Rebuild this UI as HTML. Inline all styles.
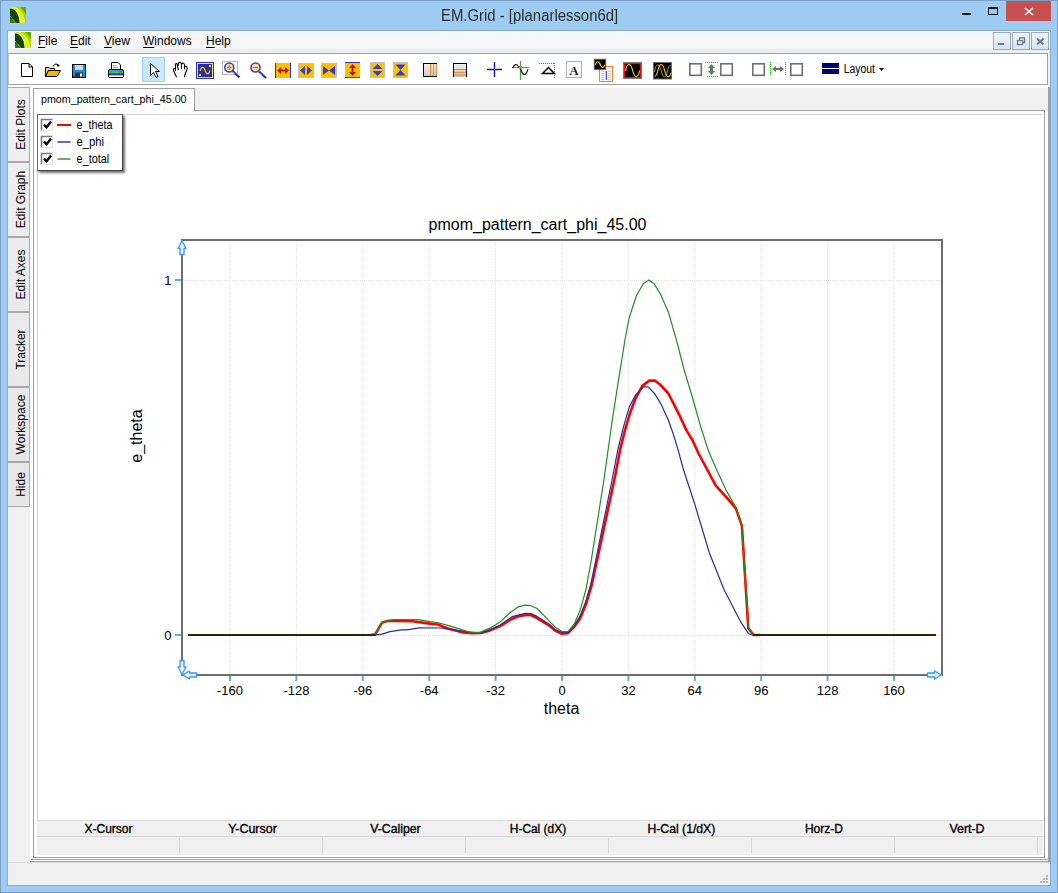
<!DOCTYPE html>
<html><head><meta charset="utf-8">
<style>
*{margin:0;padding:0;box-sizing:border-box}
html,body{width:1058px;height:893px;overflow:hidden;background:#9ecbf2;font-family:"Liberation Sans",sans-serif;color:#000}
.a{position:absolute}
.t{position:absolute;white-space:nowrap;line-height:1}
u{text-underline-offset:2px}
</style></head><body>
<!-- window frame -->
<div class="a" style="left:0;top:0;width:1058px;height:893px;border:1px solid #7a9fc6"></div>
<!-- title -->
<div class="t" style="left:441px;top:8px;font-size:15.6px;color:#2b2b2b;transform:scaleX(0.955);transform-origin:0 0">EM.Grid - [planarlesson6d]</div>
<!-- client -->
<div class="a" style="left:7px;top:30px;width:1044px;height:856px;background:#f0f0f0;border:1px solid #86acd5"></div>
<!-- menubar -->
<div class="a" style="left:8px;top:31px;width:1042px;height:22px;background:#f5f6f7"></div>
<div class="a" style="left:8px;top:49px;width:1042px;height:4px;background:#eceef0"></div>
<div class="t" style="left:38px;top:35px;font-size:12px"><u>F</u>ile</div>
<div class="t" style="left:70px;top:35px;font-size:12px"><u>E</u>dit</div>
<div class="t" style="left:104px;top:35px;font-size:12px"><u>V</u>iew</div>
<div class="t" style="left:143px;top:35px;font-size:12px"><u>W</u>indows</div>
<div class="t" style="left:206px;top:35px;font-size:12px"><u>H</u>elp</div>
<!-- toolbar -->
<div class="a" style="left:8px;top:53px;width:1040px;height:32px;background:#fff;border:1px solid #a0a0a0;border-left-color:#c8c8c8"></div>
<!-- child window -->
<div class="a" style="left:30px;top:85px;width:1020px;height:777px;background:#fff"></div>
<div class="a" style="left:1048px;top:87px;width:2px;height:775px;background:#a0a0a0"></div>
<div class="a" style="left:31px;top:859px;width:1019px;height:1px;background:#a0a0a0"></div>
<div class="a" style="left:30px;top:861px;width:1020px;height:1px;background:#a0a0a0"></div>
<!-- tab strip -->
<div class="a" style="left:195px;top:88px;width:853px;height:23px;background:#f0f0f0"></div>
<div class="a" style="left:33px;top:88px;width:162px;height:23px;background:#fff;border:1px solid #a0a0a0;border-bottom:none"></div>
<div class="t" style="left:41px;top:94px;font-size:10.7px">pmom_pattern_cart_phi_45.00</div>
<!-- tab page frame -->
<div class="a" style="left:33px;top:110px;width:1012px;height:748px;border:1px solid #a0a0a0;border-top:none"></div>
<div class="a" style="left:195px;top:110px;width:850px;height:1px;background:#a0a0a0"></div>
<div class="a" style="left:37px;top:114px;width:1006px;height:707px;background:#fff;border-left:1px solid #d4d4d4;border-top:1px solid #d4d4d4"></div>
<!-- vertical tabs -->
<div class="a" style="left:8px;top:87px;width:22px;height:775px;background:#f0f0f0"></div>
<svg class="a" style="left:0;top:0" width="1058" height="893" viewBox="0 0 1058 893">
<g stroke="#e2e2e2" stroke-width="1" stroke-dasharray="1,1"><line x1="230.0" y1="242" x2="230.0" y2="674"/><line x1="296.4" y1="242" x2="296.4" y2="674"/><line x1="362.8" y1="242" x2="362.8" y2="674"/><line x1="429.2" y1="242" x2="429.2" y2="674"/><line x1="495.6" y1="242" x2="495.6" y2="674"/><line x1="562.0" y1="242" x2="562.0" y2="674"/><line x1="628.4" y1="242" x2="628.4" y2="674"/><line x1="694.8" y1="242" x2="694.8" y2="674"/><line x1="761.2" y1="242" x2="761.2" y2="674"/><line x1="827.6" y1="242" x2="827.6" y2="674"/><line x1="894.0" y1="242" x2="894.0" y2="674"/><line x1="184" y1="280.5" x2="941" y2="280.5"/><line x1="184" y1="635.5" x2="941" y2="635.5"/></g>
<g stroke="#66b0b0" stroke-width="2"><line x1="230.0" y1="676" x2="230.0" y2="681"/><line x1="296.4" y1="676" x2="296.4" y2="681"/><line x1="362.8" y1="676" x2="362.8" y2="681"/><line x1="429.2" y1="676" x2="429.2" y2="681"/><line x1="495.6" y1="676" x2="495.6" y2="681"/><line x1="562.0" y1="676" x2="562.0" y2="681"/><line x1="628.4" y1="676" x2="628.4" y2="681"/><line x1="694.8" y1="676" x2="694.8" y2="681"/><line x1="761.2" y1="676" x2="761.2" y2="681"/><line x1="827.6" y1="676" x2="827.6" y2="681"/><line x1="894.0" y1="676" x2="894.0" y2="681"/><line x1="175" y1="280" x2="181" y2="280"/><line x1="175" y1="635" x2="181" y2="635"/></g>
<rect x="182" y="240" width="760" height="435" fill="none" stroke="#6e6e6e" stroke-width="2"/>
<polyline fill="none" stroke="#ff0000" stroke-width="2.6" stroke-linejoin="round" points="370,635 375.1,634.6 381.9,622.8 388.2,620.8 412.5,621.3 430,623.6 437.9,624.5 447,628.2 464,632.7 472.5,633.3 481,633 490,630.4 500.2,626.1 509.9,619.9 518.4,616.2 526.3,614.9 530.8,615 537.1,618.2 550,626.1 555.1,630.6 561.9,633.8 568,633.1 574,627 580,618.7 586.4,603 591.7,585.1 597.1,560 614.3,480 620.2,449.4 625.2,429.3 630.2,412.5 635.8,397.9 642.6,385.6 649.3,380.6 654.9,380.6 660,384.5 668,393 673.6,403.6 679.2,414.8 685.9,429.4 692.6,440.5 698.8,454 706.6,468.5 715.6,485.3 726.7,497.6 736,508.7 741.9,525.9 748.3,628.1 753.7,635 760,635"/>
<polyline fill="none" stroke="#2b2ba0" stroke-width="1.2" stroke-linejoin="round" points="370,635 375.1,634.8 381.3,634.4 389.9,631.6 401.2,629.9 406.9,629.9 419.3,627.9 441.3,628 449.9,629.3 466.9,631.8 481,633 490,629.6 500.2,625 512.1,616.7 525.2,613.3 530.8,613.6 537.1,616.4 550,624.7 555.1,629.5 561.9,632.3 568,632.9 574,625.9 580,616.4 585.5,602.1 590.8,584.2 595.8,560 612,480 617.9,449.4 623.5,427 629.3,406.9 635.8,394.6 643.7,386.9 648.2,386.9 654.9,394 660.7,403.6 668,419.3 673.6,435 678.6,451.7 683.1,468.5 694.6,503.7 709.4,553 724.2,590 741.4,623.2 748.8,633.8 752.5,635 760,635"/>
<polyline fill="none" stroke="#1f8f1f" stroke-width="1.2" stroke-linejoin="round" points="370,635 375.1,634.4 381.9,622.6 388.2,620.6 394.4,619.6 418.2,619.6 430,621.6 437.4,622.5 448.7,625.6 469.7,632.1 479.9,632.4 490,628.1 500.2,622.1 509.9,612.8 518.4,606.8 525.2,605.1 530.8,605.7 537.1,608.5 550,621.8 555.1,627 561.9,631.5 568,631.7 574,624.4 580,610.8 585.9,589.6 591.3,560 603.9,480 612.4,419 620.2,369.6 625.2,338.5 629.2,317.5 636.5,295.5 643.3,283.7 648.8,280.1 654.4,284.1 660.5,294.2 668.5,312.3 676.6,340.6 684.2,370 692.6,398 700.5,426 708.3,450.6 716.1,468.5 726.7,491.4 736,507.4 741.9,525.9 748.3,628.1 753.7,635 760,635"/>
<g stroke="#2b2800" stroke-width="2"><line x1="188" y1="635" x2="375.5" y2="635"/><line x1="753.2" y1="635" x2="936" y2="635"/></g>
<g font-family="Liberation Sans" font-size="13" fill="#000"><text x="230.0" y="695" text-anchor="middle">-160</text><text x="296.4" y="695" text-anchor="middle">-128</text><text x="362.8" y="695" text-anchor="middle">-96</text><text x="429.2" y="695" text-anchor="middle">-64</text><text x="495.6" y="695" text-anchor="middle">-32</text><text x="562.0" y="695" text-anchor="middle">0</text><text x="628.4" y="695" text-anchor="middle">32</text><text x="694.8" y="695" text-anchor="middle">64</text><text x="761.2" y="695" text-anchor="middle">96</text><text x="827.6" y="695" text-anchor="middle">128</text><text x="894.0" y="695" text-anchor="middle">160</text><text x="171.5" y="285" text-anchor="end">1</text><text x="171.5" y="640" text-anchor="end">0</text></g>
<g font-family="Liberation Sans" font-size="16" fill="#000"><text x="537.5" y="230" text-anchor="middle">pmom_pattern_cart_phi_45.00</text><text x="561.5" y="714" text-anchor="middle">theta</text><text transform="translate(141.7,436) rotate(-90)" text-anchor="middle">e_theta</text></g>
<path fill="#f0f0f0" stroke="#3399ff" stroke-width="1.3" stroke-linejoin="round" d="M182,240.5 L186,248.5 L184,248.5 L184,254.5 L180,254.5 L180,248.5 L178,248.5 Z"/>
<path fill="#f0f0f0" stroke="#3399ff" stroke-width="1.3" stroke-linejoin="round" d="M182,674.5 L178,667 L180,667 L180,660.5 L184,660.5 L184,667 L186,667 Z"/>
<path fill="#f0f0f0" stroke="#3399ff" stroke-width="1.3" stroke-linejoin="round" d="M182.5,675 L189.5,671 L189.5,673 L196.5,673 L196.5,677 L189.5,677 L189.5,679 Z"/>
<path fill="#f0f0f0" stroke="#3399ff" stroke-width="1.3" stroke-linejoin="round" d="M941.5,675 L934.5,671 L934.5,673 L927.5,673 L927.5,677 L934.5,677 L934.5,679 Z"/>
</svg>
<!-- legend -->
<div class="a" style="left:39px;top:116px;width:86px;height:57px;background:rgba(0,0,0,0.55);filter:blur(1px)"></div>
<div class="a" style="left:37px;top:114px;width:86px;height:57px;background:#fff;border:1px solid #6a6a6a;border-right-color:#444;border-bottom-color:#444"></div>
<svg class="a" style="left:0;top:0" width="200" height="200" viewBox="0 0 200 200" font-family="Liberation Sans">
<g>
<rect x="41" y="119" width="12" height="12" fill="#fff"/>
<path d="M41.5,131 V119.5 H53" fill="none" stroke="#7a7a7a" stroke-width="1.6"/>
<path d="M41,130.5 H52.5 V119" fill="none" stroke="#e2e2e2" stroke-width="1"/>
<path d="M44,124.5 L46.5,127.5 L51,121.5" fill="none" stroke="#000" stroke-width="2.3"/>
</g>
<g transform="translate(0,17)">
<rect x="41" y="119" width="12" height="12" fill="#fff"/>
<path d="M41.5,131 V119.5 H53" fill="none" stroke="#7a7a7a" stroke-width="1.6"/>
<path d="M41,130.5 H52.5 V119" fill="none" stroke="#e2e2e2" stroke-width="1"/>
<path d="M44,124.5 L46.5,127.5 L51,121.5" fill="none" stroke="#000" stroke-width="2.3"/>
</g>
<g transform="translate(0,34)">
<rect x="41" y="119" width="12" height="12" fill="#fff"/>
<path d="M41.5,131 V119.5 H53" fill="none" stroke="#7a7a7a" stroke-width="1.6"/>
<path d="M41,130.5 H52.5 V119" fill="none" stroke="#e2e2e2" stroke-width="1"/>
<path d="M44,124.5 L46.5,127.5 L51,121.5" fill="none" stroke="#000" stroke-width="2.3"/>
</g>
<rect x="57" y="124" width="14" height="2" fill="#ff0000"/>
<rect x="57.5" y="141" width="13" height="2" fill="#6a6ab8"/>
<rect x="57.5" y="158" width="13" height="2" fill="#6ab06a"/>
<g font-size="12" fill="#000" letter-spacing="0">
<text x="76.6" y="128.6" textLength="35.9" lengthAdjust="spacingAndGlyphs">e_theta</text>
<text x="76.6" y="145.6" textLength="27.5" lengthAdjust="spacingAndGlyphs">e_phi</text>
<text x="76.6" y="162.6" textLength="32.7" lengthAdjust="spacingAndGlyphs">e_total</text>
</g>
</svg>

<!-- vertical tabs -->
<div class="a" style="left:8px;top:85px;width:22px;height:2px;background:#fff"></div>
<div class="a" style="left:8px;top:87px;width:22px;height:420px;border-top:1px solid #acacac;border-right:1px solid #acacac;border-bottom:1px solid #acacac;background:linear-gradient(#f0f0f0,#e6e6e6)"></div>
<div class="a" style="left:8px;top:161px;width:21px;height:2px;background:#a8a8a8"></div>
<div class="a" style="left:8px;top:236px;width:21px;height:2px;background:#a8a8a8"></div>
<div class="a" style="left:8px;top:311px;width:21px;height:2px;background:#a8a8a8"></div>
<div class="a" style="left:8px;top:386px;width:21px;height:2px;background:#a8a8a8"></div>
<div class="a" style="left:8px;top:461px;width:21px;height:2px;background:#a8a8a8"></div>
<svg class="a" style="left:0;top:0" width="40" height="520" viewBox="0 0 40 520" font-family="Liberation Sans" font-size="12" fill="#000">
<text transform="translate(25,124.5) rotate(-90)" text-anchor="middle">Edit Plots</text>
<text transform="translate(25,199.5) rotate(-90)" text-anchor="middle">Edit Graph</text>
<text transform="translate(25,274.5) rotate(-90)" text-anchor="middle">Edit Axes</text>
<text transform="translate(25,349.5) rotate(-90)" text-anchor="middle">Tracker</text>
<text transform="translate(25,424.5) rotate(-90)" text-anchor="middle">Workspace</text>
<text transform="translate(25,484.5) rotate(-90)" text-anchor="middle">Hide</text>
</svg>
<!-- status grid -->
<div class="a" style="left:37px;top:820px;width:1006px;height:1px;background:#d8d8d8"></div>
<div class="a" style="left:37px;top:821px;width:1006px;height:34px;background:#f0f0f0"></div>
<div class="a" style="left:37px;top:836px;width:1006px;height:1px;background:#d8d8d8"></div>
<div class="a" style="left:179px;top:838px;width:1px;height:15px;background:#d8d8d8"></div>
<div class="a" style="left:322px;top:838px;width:1px;height:15px;background:#d8d8d8"></div>
<div class="a" style="left:465px;top:838px;width:1px;height:15px;background:#d8d8d8"></div>
<div class="a" style="left:608px;top:838px;width:1px;height:15px;background:#d8d8d8"></div>
<div class="a" style="left:751px;top:838px;width:1px;height:15px;background:#d8d8d8"></div>
<div class="a" style="left:894px;top:838px;width:1px;height:15px;background:#d8d8d8"></div>
<div class="a" style="left:1037px;top:838px;width:1px;height:15px;background:#d8d8d8"></div>
<svg class="a" style="left:0;top:800px" width="1058" height="60" viewBox="0 800 1058 60" font-family="Liberation Sans" font-size="12" fill="#000" stroke="#000" stroke-width="0.35"><text x="84.5" y="833" textLength="48" lengthAdjust="spacingAndGlyphs">X-Cursor</text><text x="228.2" y="833" textLength="48.6" lengthAdjust="spacingAndGlyphs">Y-Cursor</text><text x="370.3" y="833" textLength="50.3" lengthAdjust="spacingAndGlyphs">V-Caliper</text><text x="509.8" y="833" textLength="56.3" lengthAdjust="spacingAndGlyphs">H-Cal (dX)</text><text x="647.5" y="833" textLength="67.8" lengthAdjust="spacingAndGlyphs">H-Cal (1/dX)</text><text x="804.9" y="833" textLength="38" lengthAdjust="spacingAndGlyphs">Horz-D</text><text x="949.5" y="833" textLength="35" lengthAdjust="spacingAndGlyphs">Vert-D</text></svg>
<!-- grip -->
<svg class="a" style="left:1039px;top:873px" width="12" height="12" viewBox="0 0 12 12" fill="#b8b8b8">
<rect x="7" y="2" width="2" height="2"/><rect x="4" y="5" width="2" height="2"/><rect x="7" y="5" width="2" height="2"/><rect x="1" y="8" width="2" height="2"/><rect x="4" y="8" width="2" height="2"/><rect x="7" y="8" width="2" height="2"/>
</svg>

<!-- status bar -->
<div class="a" style="left:8px;top:862px;width:1042px;height:1px;background:#dadada"></div>
<svg class="a" style="left:0;top:0" width="1058" height="893" viewBox="0 0 1058 893" font-family="Liberation Sans">
<defs>
<linearGradient id="appg" x1="0" y1="1" x2="1" y2="0"><stop offset="0" stop-color="#0d3a05"/><stop offset="0.5" stop-color="#3f7a0c"/><stop offset="1" stop-color="#b8e020"/></linearGradient>
<linearGradient id="mdig" x1="0" y1="0" x2="0" y2="1"><stop offset="0" stop-color="#eef4fb"/><stop offset="1" stop-color="#d6e4f2"/></linearGradient>
<linearGradient id="vlg" x1="0" y1="0" x2="0" y2="1"><stop offset="0" stop-color="#f4f4f4"/><stop offset="1" stop-color="#c8c8c8"/></linearGradient>
<clipPath id="appc"><rect x="0" y="0" width="16" height="16"/></clipPath>
<g id="app" clip-path="url(#appc)">
<rect x="0" y="0" width="16" height="16" fill="#72a400"/>
<ellipse cx="0" cy="16" rx="17.5" ry="19.5" fill="#a0d810"/>
<ellipse cx="0" cy="16" rx="15" ry="17" fill="#eef830"/>
<ellipse cx="0" cy="16" rx="13" ry="16" fill="#c0e828"/>
<ellipse cx="0" cy="16" rx="12" ry="15.6" fill="#f4f838"/>
<ellipse cx="0" cy="16" rx="9.6" ry="14.6" fill="#0c460a"/>
<path d="M0,11 L6,16 L0,16 Z" fill="#506e12"/>
<path d="M0,9.3 L6.2,16" stroke="#e8e8e8" stroke-width="1" stroke-dasharray="1,0.8"/>
</g>
</defs>
<!-- title bar icon -->
<use href="#app" x="10" y="7"/>
<!-- caption buttons -->
<rect x="962" y="13" width="9" height="2" fill="#111"/>
<rect x="988.5" y="7.5" width="9" height="7" fill="none" stroke="#111" stroke-width="1"/>
<rect x="988" y="7" width="10" height="2" fill="#111"/>
<rect x="1006" y="1" width="45" height="20" fill="#c75050"/>
<path d="M1025,8 L1033,15 M1033,8 L1025,15" stroke="#fff" stroke-width="1.6"/>
<!-- menu icon -->
<use href="#app" x="15" y="32"/>
<!-- MDI buttons -->
<g stroke="#9aaabb" stroke-width="1" fill="url(#mdig)">
<rect x="993.5" y="32.5" width="17" height="17"/>
<rect x="1012.5" y="32.5" width="17" height="17"/>
<rect x="1031.5" y="32.5" width="17" height="17"/>
</g>
<rect x="998" y="43" width="6" height="2" fill="#6d7a88"/>
<g fill="none" stroke="#6d7a88" stroke-width="1.3">
<rect x="1017.5" y="40.5" width="5" height="4"/>
<path d="M1019.5,40 V37.8 H1024.6 V42.5 H1022.5"/>
</g>
<path d="M1037,38.5 L1043.5,44.5 M1043.5,38.5 L1037,44.5" stroke="#6d7a88" stroke-width="1.8"/>

<!-- TOOLBAR -->
<!-- new -->
<path d="M21.5,63.5 H29 L32.5,67 V76.5 H21.5 Z M29,63.5 V67 H32.5" fill="#fff" stroke="#000" stroke-width="1"/>
<!-- open -->
<path d="M45.5,67.5 H49 L50,68.5 H54.5 V70.5 H48.5 L45.5,76.5 Z" fill="#f5d868" stroke="#000" stroke-width="1"/>
<path d="M45.5,76.5 L48.5,70.5 H60.5 L57,76.5 Z" fill="#f2b800" stroke="#000" stroke-width="1"/>
<path d="M53,66.5 Q55,62.5 58.5,65" fill="none" stroke="#000" stroke-width="1"/>
<path d="M57,64 L60,65.5 L57.5,67 Z" fill="#000"/>
<!-- save -->
<rect x="72.5" y="64.5" width="13" height="13" fill="#1a8fe6" stroke="#000" stroke-width="1"/>
<rect x="75" y="65" width="8" height="5" fill="#d8d8d8"/>
<rect x="75" y="72.5" width="8" height="5" fill="#333"/>
<rect x="80" y="73.5" width="2" height="3" fill="#fff"/>
<rect x="73" y="75.5" width="2" height="2" fill="#1f3fa0"/>
<!-- printer -->
<path d="M111.5,62.5 H118 L120.5,65 V70 H111.5 Z" fill="#fff" stroke="#000" stroke-width="1"/>
<path d="M113,65.5 H116 M113,67.5 H118" stroke="#888" stroke-width="0.8"/>
<rect x="108.5" y="69.5" width="15" height="8" rx="1.5" fill="#20a0e0" stroke="#000" stroke-width="1"/>
<rect x="109" y="71.5" width="14" height="1.5" fill="#5ac040"/>
<rect x="109" y="73.5" width="14" height="1.5" fill="#1a3ab0"/>
<rect x="109" y="75.5" width="14" height="1.5" fill="#ffffff"/>
<rect x="119" y="71" width="3" height="1.5" fill="#e04040"/>
<!-- selected pointer -->
<rect x="142.5" y="57.5" width="22" height="24" fill="#cce8ff" stroke="#99d1ff" stroke-width="1"/>
<path d="M150.5,63.5 V75.5 L153.5,72.5 L156,77.5 L158,76.5 L155.5,71.5 H159.5 Z" fill="#fff" stroke="#000" stroke-width="1" stroke-linejoin="round"/>
<!-- hand -->
<path d="M176.4,76.8 L173.4,70.5 Q172.8,68.3 175.2,68.4 L175.6,70.8 M175.6,68.4 L175.3,65 Q175.4,63 177,63.6 L178.3,69.8 M178.2,65.5 Q178.3,62.2 180,62.4 Q181.3,62.6 181.4,64 V68.8 M181.4,64.5 Q181.6,63 183.2,63.2 Q184.4,63.5 184.5,65 V69 M184.5,66.8 Q185.5,65.8 186.8,66.8 Q187.6,67.7 186.8,70 L185,74.5 L184.6,76.8" fill="none" stroke="#000" stroke-width="1.1" stroke-linecap="round"/>
<!-- scope -->
<rect x="196" y="62" width="18" height="17" fill="#2c32b8"/>
<rect x="197.5" y="63.5" width="15" height="14" fill="#2a2f9a" stroke="#f2e2a2" stroke-width="1"/>
<path d="M200.4,71 V69.5 L201.8,67.6 H203.6 L204.6,69.2 L205.6,71.8 L206.8,73.6 H208.4 L209.6,71.8 V70.5" fill="none" stroke="#ffd000" stroke-width="1.2"/>
<rect x="199" y="74" width="2" height="2" fill="#ffd800"/>
<rect x="209" y="65" width="2" height="2" fill="#ffd800"/>
<!-- zoom in -->
<rect x="222.5" y="61.5" width="15" height="13" fill="none" stroke="#b8b8b8" stroke-width="1"/>
<path d="M232,70.5 L239.5,77.5" stroke="#2a2fc0" stroke-width="2.2"/>
<path d="M233,72 L235,74" stroke="#70c020" stroke-width="1"/>
<circle cx="229.3" cy="67.5" r="4.5" fill="#f5dca0" stroke="#3a40d0" stroke-width="1.6"/>
<path d="M226.8,67.5 H231.8 M229.3,65 V70" stroke="#f07000" stroke-width="1.2"/>
<!-- zoom out -->
<path d="M259,71.5 L266,78" stroke="#2a2fc0" stroke-width="2.2"/>
<path d="M260,73 L262,75" stroke="#70c020" stroke-width="1"/>
<circle cx="255.5" cy="67.5" r="4.5" fill="#f5dca0" stroke="#3a40d0" stroke-width="1.6"/>
<path d="M253,67.5 H258" stroke="#f07000" stroke-width="1.2"/>
<!-- expand icons -->
<rect x="275" y="63" width="16" height="15" fill="#f8c200"/>
<rect x="275" y="63" width="1" height="15" fill="#3030d0"/><rect x="290" y="63" width="1" height="15" fill="#3030d0"/>
<path d="M277,70.5 L281,67 V69.5 H285 V67 L289,70.5 L285,74 V71.5 H281 V74 Z" fill="#c81010"/>
<rect x="298.5" y="63.5" width="15" height="14" fill="#f8c200" stroke="#c0c0c0" stroke-width="1"/>
<path d="M300,70.5 L305,66 V75 Z M312,70.5 L307,66 V75 Z" fill="#3a3ad0"/>
<rect x="321.5" y="63.5" width="15" height="14" fill="#f8c200" stroke="#c0c0c0" stroke-width="1"/>
<path d="M323,66 L329,70.5 L323,75 Z M335,66 L329,70.5 L335,75 Z" fill="#3a3ad0"/>
<rect x="345" y="62" width="15" height="16" fill="#f8c200"/>
<rect x="345" y="62" width="15" height="1" fill="#3030d0"/><rect x="345" y="77" width="15" height="1" fill="#3030d0"/>
<path d="M352.5,64 L356,68 H353.5 V72 H356 L352.5,76 L349,72 H351.5 V68 H349 Z" fill="#c81010"/>
<rect x="370.5" y="62.5" width="14" height="15" fill="#f8c200" stroke="#c0c0c0" stroke-width="1"/>
<path d="M372.5,69 L377.5,64 L382.5,69 Z M372.5,71 L377.5,76 L382.5,71 Z" fill="#3a3ad0"/>
<rect x="393.5" y="62.5" width="14" height="15" fill="#f8c200" stroke="#c0c0c0" stroke-width="1"/>
<path d="M395.5,64.5 H405.5 L400.5,70 Z M395.5,75.5 H405.5 L400.5,70 Z" fill="#3a3ad0"/>
<!-- v-lines -->
<rect x="423" y="63" width="14" height="14" fill="url(#vlg)"/>
<path d="M423,63.5 H437 M423,76.5 H437 M423.5,63 V77" stroke="#000" stroke-width="1"/>
<path d="M430.5,64 V76 M433.5,64 V76 M436.3,64 V76" stroke="#f07800" stroke-width="0.9"/>
<!-- h-lines -->
<rect x="453" y="63" width="14" height="14" fill="url(#vlg)"/>
<path d="M453,63.5 H467 M453.5,63 V77 M466.5,63 V77" stroke="#000" stroke-width="1"/>
<path d="M454,69.5 H466 M454,72.3 H466 M454,75 H466" stroke="#f07800" stroke-width="0.9"/>
<!-- crosshair -->
<path d="M494.5,62 V77 M487,69.5 H502" stroke="#14148c" stroke-width="1.4"/>
<!-- tracker -->
<path d="M520.5,61 V80 M512,67.5 H529" stroke="#30b040" stroke-width="1.2"/>
<path d="M512.5,68 Q515.5,62 518.5,66.5 L521,70 Q523,76 525.5,74 Q527.5,72 528,69" fill="none" stroke="#000" stroke-width="1.1"/>
<rect x="519" y="66" width="3" height="3" fill="#f07800"/>
<!-- triangle -->
<path d="M539,63.5 H555 M554.5,63 V78" stroke="#ff00ff" stroke-width="1" stroke-dasharray="1,1"/>
<path d="M542.5,73.5 L548.5,67.5 L554.5,73.5 Z" fill="none" stroke="#000" stroke-width="1.5"/>
<!-- A -->
<rect x="566.5" y="61.5" width="15" height="16" fill="#fff" stroke="#b0b0b0" stroke-width="1"/>
<text x="574" y="75" text-anchor="middle" font-family="Liberation Serif" font-weight="bold" font-size="13" fill="#1a1a60">A</text>
<!-- copy -->
<rect x="599.5" y="66.5" width="13" height="15" fill="#fff" stroke="#f58030" stroke-width="1.1"/>
<path d="M601,71.3 H604.5 M601,73.4 H604.5 M601,75.5 H604.5 M601,77.6 H604.5 M601,79.7 H604.5 M607.8,71.3 H611 M607.8,73.4 H611 M607.8,75.5 H611 M607.8,77.6 H611 M607.8,79.7 H611" stroke="#a8a8a8" stroke-width="0.7"/>
<path d="M606.3,71 V80" stroke="#3030e0" stroke-width="1.1"/>
<rect x="594.2" y="59.2" width="11.6" height="10.4" fill="#000" stroke="#6a6a6a" stroke-width="0.9"/>
<path d="M595.3,64.8 Q596.5,60.8 598.5,62 Q600,63.5 601,66 Q602.5,68.5 604,66.5 L604.8,64.8" fill="none" stroke="#ffd000" stroke-width="1.1"/>
<!-- red scope -->
<rect x="623" y="62" width="19" height="17" fill="#7a7a7a"/>
<rect x="624" y="63" width="17" height="15" fill="#e01010"/>
<rect x="625.2" y="64.2" width="14.6" height="12.6" fill="#000"/>
<path d="M625.6,70.8 Q626.5,64.5 629,64.5 Q631,64.5 632.5,70 Q634,76.5 636,76.5 Q638.5,76.5 639.6,70.5" fill="none" stroke="#ffe000" stroke-width="1.1"/>
<!-- dual scope -->
<rect x="653" y="62" width="19" height="17.5" fill="#6a6a6a"/>
<rect x="654" y="63" width="17" height="15.5" fill="#000"/>
<path d="M654.5,72 Q655.5,65 657.8,64.8 Q659.8,64.8 661,70 Q662.5,77 664.5,77 Q666.5,77 667.5,71 Q668.8,64.8 670.8,65.5" fill="none" stroke="#a0a0a0" stroke-width="0.9"/>
<path d="M654.8,76.5 Q656.8,75.5 658,70 Q659.3,64.5 661,64.5 Q663,64.5 664.5,70 Q666,76.8 668,76.8 Q670,76.8 670.8,73" fill="none" stroke="#ffc800" stroke-width="1.1"/>
<!-- boxes -->
<g fill="none" stroke="#707070" stroke-width="1.6">
<rect x="689.8" y="63.8" width="11.5" height="11.5"/>
<rect x="720.8" y="63.8" width="11.5" height="11.5"/>
<rect x="752.8" y="63.8" width="11.5" height="11.5"/>
<rect x="790.8" y="63.8" width="11.5" height="11.5"/>
</g>
<path d="M705,62.5 H718 M707,76.5 H718" stroke="#00d000" stroke-width="1" stroke-dasharray="1.2,0.8"/>
<path d="M711.5,64 L715,68 H713 V71 H715 L711.5,75 L708,71 H710 V68 H708 Z" fill="#707070"/>
<path d="M770.5,62 V75 M785.5,62 V75" stroke="#00d000" stroke-width="1" stroke-dasharray="1.2,0.8"/>
<path d="M772,69 L776,66 V68 H780 V66 L784,69 L780,72 V70 H776 V72 Z" fill="#707070"/>
<!-- layout -->
<rect x="822" y="63" width="17" height="5" fill="#000080"/>
<rect x="822" y="69" width="17" height="5" fill="#000080"/>
<text x="843.8" y="72.8" font-size="12" textLength="31.2" lengthAdjust="spacingAndGlyphs" fill="#000">Layout</text>
<path d="M879,68 H884 L881.5,71 Z" fill="#000"/>
</svg>

</body></html>
